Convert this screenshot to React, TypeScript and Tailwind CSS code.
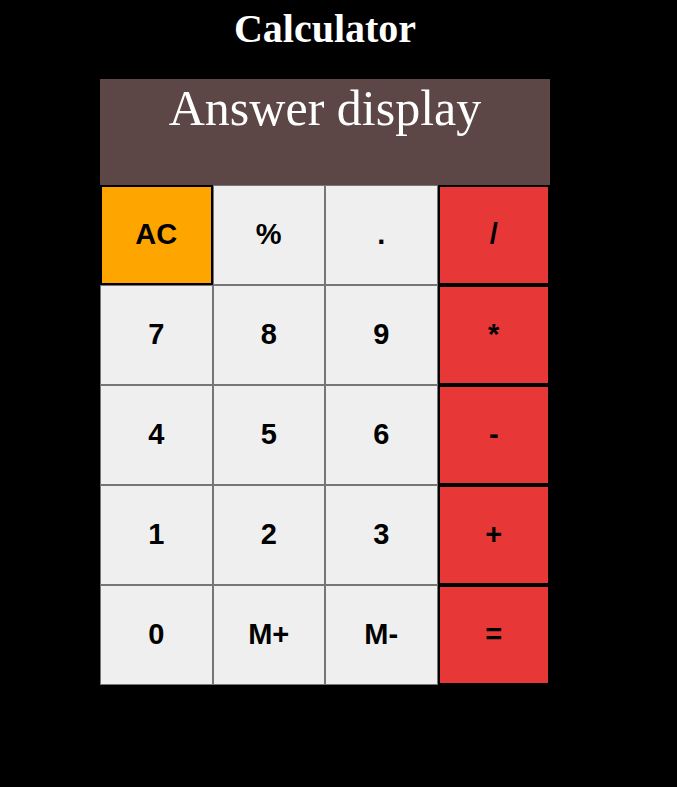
import React from 'react'

type Key = { label: string; kind: 'gray' | 'orange' | 'red' }

const KEYS: Key[] = [
  { label: 'AC', kind: 'orange' }, { label: '%', kind: 'gray' }, { label: '.', kind: 'gray' }, { label: '/', kind: 'red' },
  { label: '7', kind: 'gray' }, { label: '8', kind: 'gray' }, { label: '9', kind: 'gray' }, { label: '*', kind: 'red' },
  { label: '4', kind: 'gray' }, { label: '5', kind: 'gray' }, { label: '6', kind: 'gray' }, { label: '-', kind: 'red' },
  { label: '1', kind: 'gray' }, { label: '2', kind: 'gray' }, { label: '3', kind: 'gray' }, { label: '+', kind: 'red' },
  { label: '0', kind: 'gray' }, { label: 'M+', kind: 'gray' }, { label: 'M-', kind: 'gray' }, { label: '=', kind: 'red' },
]

export default function App() {
  return (
    <div className="min-h-[787px] w-full bg-black">
      <div className="ml-[100px] w-[450px] pt-[6px]">
        <h1 className="text-center text-[40px] font-bold leading-[46px] text-white [font-family:'Liberation_Serif',serif]">
          Calculator
        </h1>

        {/* display */}
        <div className="mt-[27px] h-[106px] bg-[#5c4646] pt-[1px] text-center text-[50px] leading-[57px] text-white [font-family:'Liberation_Serif',serif]">
          Answer display
        </div>

        {/* keypad */}
        <div className="grid grid-cols-4 [font-family:'Liberation_Sans',Arial,sans-serif]">
          {KEYS.map(k => {
            const base = 'flex h-[100px] items-center justify-center text-[29px] font-bold text-black'
            let cls = ''
            if (k.kind === 'orange') cls = 'bg-[#ffa500] border-2 border-black'
            else if (k.kind === 'red') cls = 'bg-[#e83737] border-2 border-black'
            else cls = 'bg-[#efefef] border border-[#767676]'
            return (
              <div key={k.label} className={`${base} ${cls}`}>
                {k.label}
              </div>
            )
          })}
        </div>
      </div>
    </div>
  )
}
